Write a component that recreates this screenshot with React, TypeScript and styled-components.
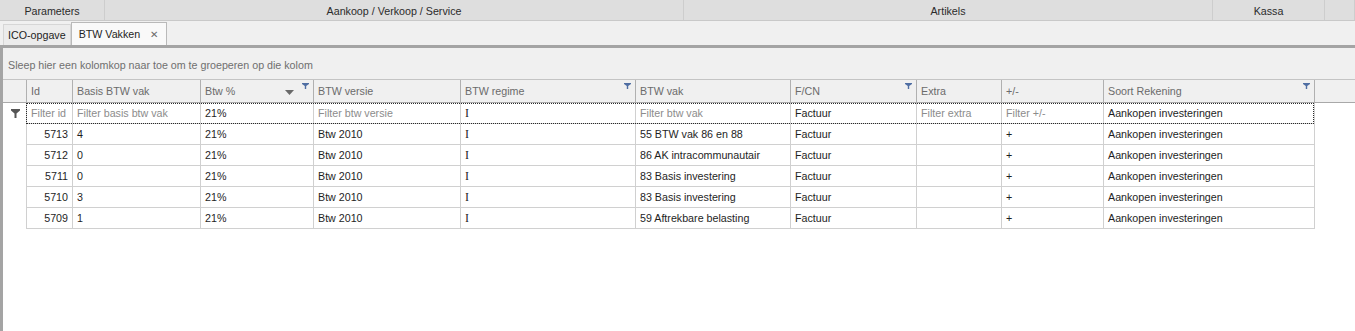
import React from "react";
import styled, { createGlobalStyle } from "styled-components";

const GlobalStyle = createGlobalStyle`
  html, body {
    margin: 0;
    padding: 0;
    background: #ffffff;
  }
  body {
    font-family: "Liberation Sans", Arial, sans-serif;
    font-size: 10.7px;
    color: #1e1e1e;
  }
  * {
    box-sizing: border-box;
  }
`;

const COLS = "24px 46px 128px 113px 147px 175px 155px 126px 85px 102px 211px 1fr";

const Page = styled.div`
  width: 1355px;
  height: 331px;
  overflow: hidden;
  display: flex;
  flex-direction: column;
  background: #ffffff;
`;

const MenuBar = styled.div`
  display: grid;
  grid-template-columns: 105px 579px 529px 112px 1fr;
  height: 21px;
  background: #dedede;
  border-bottom: 1px solid #c9c9c9;
`;

const MenuItem = styled.div`
  display: flex;
  align-items: center;
  justify-content: center;
  color: #2b2b2b;
  border-right: 1px solid #cdcdcd;
  padding-top: 1px;
`;

const TabStrip = styled.div`
  display: flex;
  align-items: flex-end;
  height: 24px;
  padding-left: 3px;
  background: #f0f0f0;
`;

const Tab = styled.div<{ $active?: boolean }>`
  display: flex;
  align-items: center;
  gap: 10px;
  height: ${(p) => (p.$active ? "23px" : "21px")};
  padding: 0 ${(p) => (p.$active ? "8px" : "4px")} 0 ${(p) => (p.$active ? "7px" : "4px")};
  background: ${(p) => (p.$active ? "#f9f9f9" : "#ececec")};
  border: 1px solid ${(p) => (p.$active ? "#b9b9b9" : "#d6d6d6")};
  border-bottom: none;
  color: #1e1e1e;
`;

const CloseX = styled.span`
  color: #6a6a6a;
  font-size: 10px;
`;

const Body = styled.div`
  flex: 1;
  display: flex;
  flex-direction: column;
  border-top: 3px solid #a4a4a4;
  border-left: 3px solid #a4a4a4;
`;

const GroupPanel = styled.div`
  height: 32px;
  display: flex;
  align-items: center;
  padding-left: 5px;
  padding-top: 2px;
  background: #f0f0f0;
  color: #6f6f6f;
  border-bottom: 1px solid #c4c4c4;
`;

const HeaderRow = styled.div`
  display: grid;
  grid-template-columns: ${COLS};
  height: 23px;
  background: #f0f0f0;
  border-bottom: 1px solid #a9a9a9;
`;

const HeaderCell = styled.div<{ $end?: boolean }>`
  position: relative;
  display: flex;
  align-items: center;
  padding-left: 4px;
  color: #6b6b6b;
  border-right: ${(p) => (p.$end ? "none" : "1px solid #b0b0b0")};
`;

const FilterMark = styled.svg`
  position: absolute;
  top: 3px;
  right: 4px;
`;

const SortMark = styled.svg`
  position: absolute;
  top: 10px;
  right: 19px;
`;

const Row = styled.div`
  display: grid;
  grid-template-columns: ${COLS};
  height: 21px;
  position: relative;
`;

const FocusFrame = styled.div`
  position: absolute;
  left: 23px;
  right: 41px;
  top: 0;
  bottom: 0;
  border: 1px dotted #2a2a2a;
  pointer-events: none;
`;

const Indicator = styled.div`
  display: flex;
  align-items: center;
  justify-content: center;
`;

const Cell = styled.div<{ $align?: "right"; $muted?: boolean }>`
  display: flex;
  align-items: center;
  justify-content: ${(p) => (p.$align === "right" ? "flex-end" : "flex-start")};
  padding: 0 4px;
  color: ${(p) => (p.$muted ? "#8c8c8c" : "#1e1e1e")};
  border-right: 1px solid #d0d0d0;
  border-bottom: 1px solid #d0d0d0;
  white-space: nowrap;
  overflow: hidden;
`;

const FirstCell = styled(Cell)`
  margin-left: -1px;
  border-left: 1px solid #d0d0d0;
`;

const Blank = styled.div``;

const Serif = styled.span`
  font-family: "Liberation Serif", "Times New Roman", serif;
  font-size: 12px;
`;

const FunnelSmall = () => (
  <FilterMark width="7" height="6" viewBox="0 0 7 6">
    <path d="M0 0H7V1L4.2 3V6H2.8V3L0 1Z" fill="#4f6ea3" />
  </FilterMark>
);

const columns = [
  { title: "Id" },
  { title: "Basis BTW vak" },
  { title: "Btw %", sort: true, filter: true },
  { title: "BTW versie" },
  { title: "BTW regime", filter: true },
  { title: "BTW vak" },
  { title: "F/CN", filter: true },
  { title: "Extra" },
  { title: "+/-" },
  { title: "Soort Rekening", filter: true },
];

const filters: { text: string; muted: boolean }[] = [
  { text: "Filter id", muted: true },
  { text: "Filter basis btw vak", muted: true },
  { text: "21%", muted: false },
  { text: "Filter btw versie", muted: true },
  { text: "I", muted: false },
  { text: "Filter btw vak", muted: true },
  { text: "Factuur", muted: false },
  { text: "Filter extra", muted: true },
  { text: "Filter +/-", muted: true },
  { text: "Aankopen investeringen", muted: false },
];

const rows = [
  ["5713", "4", "21%", "Btw 2010", "I", "55 BTW vak 86 en 88", "Factuur", "", "+", "Aankopen investeringen"],
  ["5712", "0", "21%", "Btw 2010", "I", "86 AK intracommunautair", "Factuur", "", "+", "Aankopen investeringen"],
  ["5711", "0", "21%", "Btw 2010", "I", "83 Basis investering", "Factuur", "", "+", "Aankopen investeringen"],
  ["5710", "3", "21%", "Btw 2010", "I", "83 Basis investering", "Factuur", "", "+", "Aankopen investeringen"],
  ["5709", "1", "21%", "Btw 2010", "I", "59 Aftrekbare belasting", "Factuur", "", "+", "Aankopen investeringen"],
];

const renderValue = (v: string) => (v === "I" ? <Serif>I</Serif> : v);

export default function App() {
  return (
    <Page>
      <GlobalStyle />
      <MenuBar>
        <MenuItem>Parameters</MenuItem>
        <MenuItem>Aankoop / Verkoop / Service</MenuItem>
        <MenuItem>Artikels</MenuItem>
        <MenuItem>Kassa</MenuItem>
        <MenuItem />
      </MenuBar>
      <TabStrip>
        <Tab>ICO-opgave</Tab>
        <Tab $active>
          BTW Vakken <CloseX>✕</CloseX>
        </Tab>
      </TabStrip>
      <Body>
        <GroupPanel>Sleep hier een kolomkop naar toe om te groeperen op die kolom</GroupPanel>
        <HeaderRow>
          <HeaderCell />
          {columns.map((c) => (
            <HeaderCell key={c.title}>
              {c.title}
              {c.sort && (
                <SortMark width="9" height="5" viewBox="0 0 9 5">
                  <path d="M0 0H9L4.5 5Z" fill="#6a6a6a" />
                </SortMark>
              )}
              {c.filter && <FunnelSmall />}
            </HeaderCell>
          ))}
          <HeaderCell $end />
        </HeaderRow>
        <Row>
          <Indicator>
            <svg width="9" height="9" viewBox="0 0 9 9">
              <path d="M0 0H9V1.5L5.5 4.5V9H3.5V4.5L0 1.5Z" fill="#555555" />
            </svg>
          </Indicator>
          {filters.map((f, i) =>
            i === 0 ? (
              <FirstCell key={i} $muted={f.muted}>
                {f.text}
              </FirstCell>
            ) : (
              <Cell key={i} $muted={f.muted}>
                {renderValue(f.text)}
              </Cell>
            )
          )}
          <Blank />
          <FocusFrame />
        </Row>
        {rows.map((r) => (
          <Row key={r[0]}>
            <Blank />
            {r.map((v, i) =>
              i === 0 ? (
                <FirstCell key={i} $align="right">
                  {v}
                </FirstCell>
              ) : (
                <Cell key={i}>{renderValue(v)}</Cell>
              )
            )}
            <Blank />
          </Row>
        ))}
      </Body>
    </Page>
  );
}
